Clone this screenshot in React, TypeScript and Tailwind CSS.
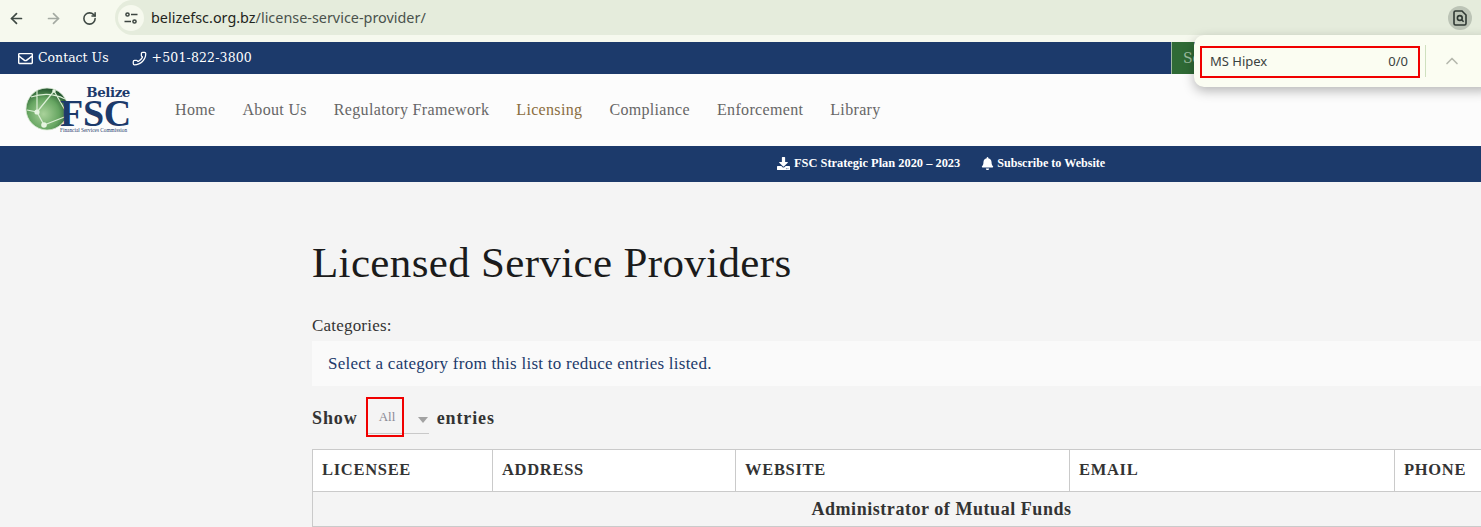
import { ArrowLeft, ArrowRight, RotateCw, ChevronUp, Phone } from 'lucide-react';
import { FaRegEnvelope, FaDownload, FaBell } from 'react-icons/fa';

const navItems = ['Home', 'About Us', 'Regulatory Framework', 'Licensing', 'Compliance', 'Enforcement', 'Library'];

const columns = [
  { label: 'LICENSEE', width: 'w-[180px]' },
  { label: 'ADDRESS', width: 'w-[243px]' },
  { label: 'WEBSITE', width: 'w-[334px]' },
  { label: 'EMAIL', width: 'w-[325px]' },
  { label: 'PHONE', width: 'w-[176px]' },
];

const Logo = () => (
  <div className="relative w-[108px] h-[48px] shrink-0">
    <svg width="54" height="46" viewBox="0 0 54 46" className="absolute left-0 top-0">
      <defs>
        <radialGradient id="globe" cx="0.42" cy="0.62" r="0.62">
          <stop offset="0" stopColor="#a9d29a" />
          <stop offset="0.6" stopColor="#66a561" />
          <stop offset="1" stopColor="#24552f" />
        </radialGradient>
      </defs>
      <circle cx="22" cy="23" r="21" fill="url(#globe)" stroke="#dcebd6" strokeWidth="0.8" />
      <g stroke="#dcefd6" strokeWidth="1.2" fill="none">
        <path d="M12 5 L12 26 L19 39 M12 26 L29 5 M29 5 L40 24 M19 39 L42 30 M6 11 Q24 5 40 13 M2 24 L12 26" />
      </g>
      <circle cx="12" cy="26" r="2.6" fill="#e6f4e0" />
      <circle cx="19" cy="39" r="2.8" fill="#e6f4e0" />
      <circle cx="29" cy="5" r="1.8" fill="#e6f4e0" />
    </svg>
    <span className="absolute right-[3px] top-[-1px] text-[13.4px] leading-[14px] font-bold text-[#1c3a6b] font-['DejaVu_Serif',serif] tracking-[-0.4px]">
      Belize
    </span>
    <span className="absolute left-[35px] top-[14px] text-[38px] leading-[26px] font-bold text-[#1c3a6b] tracking-[-0.3px]">
      FSC
    </span>
    <span className="absolute left-[35px] top-[40px] text-[5.3px] leading-[8px] whitespace-nowrap text-[#1c3a6b]">
      Financial Services Commission
    </span>
  </div>
);

export default function App() {
  return (
    <div className="relative w-[1481px] h-[527px] overflow-hidden bg-[#f4f4f4] font-['Liberation_Serif',serif] text-[#222]">
      {/* Browser bar */}
      <div className="h-[42px] bg-[#f6f9ee] flex items-start">
        <div className="flex items-center w-[115px] h-[36px] pl-[8px] gap-[20px] text-[#3f4a44]">
          <ArrowLeft size={17} strokeWidth={2.4} />
          <ArrowRight size={17} strokeWidth={2.4} className="text-[#a4aaa2]" />
          <RotateCw size={15} strokeWidth={2.5} />
        </div>
        <div className="flex-1 h-[35px] bg-[#e5ecdc] rounded-l-[18px] flex items-center pl-[3px] pr-[9px] font-['Noto_Sans',sans-serif] text-[14.4px]">
          <div className="w-[26px] h-[26px] rounded-full bg-[#f6f9ee] flex items-center justify-center">
            <svg width="14" height="12" viewBox="0 0 14 12" fill="none" stroke="#3c4540" strokeWidth="1.5">
              <circle cx="3.5" cy="2.5" r="1.6" />
              <path d="M7 2.5h6.5M0.5 9.5H7" />
              <circle cx="10.5" cy="9.5" r="1.6" />
            </svg>
          </div>
          <span className="ml-[7px] text-[#1f2420]">belizefsc.org.bz</span>
          <span className="text-[#4a524c]">/license-service-provider/</span>
          <div className="ml-auto w-[24px] h-[24px] rounded-full bg-[#bcc4b6] flex items-center justify-center">
            <svg width="14" height="16" viewBox="0 0 14 16" fill="none" stroke="#2f3833" strokeWidth="1.6">
              <path d="M9 1H2.5A1.5 1.5 0 0 0 1 2.5v11A1.5 1.5 0 0 0 2.5 15h9a1.5 1.5 0 0 0 1.5-1.5V5z" />
              <circle cx="6.8" cy="8" r="2.4" />
              <path d="M8.6 9.8l2 2" />
            </svg>
          </div>
        </div>
      </div>

      {/* Top contact bar */}
      <div className="h-[32px] bg-[#1c3a6b] flex items-center pl-[18px] text-white font-['DejaVu_Serif',serif] text-[12.5px]">
        <FaRegEnvelope size={15} />
        <span className="ml-[5px]">Contact Us</span>
        <Phone size={15} strokeWidth={2} className="ml-[23px] scale-x-[-1]" />
        <span className="ml-[5px] tracking-[0.15px]">+501-822-3800</span>
        {/* the rest of the button sits under the popover */}
        <div className="ml-auto mr-[287px] w-[23px] h-[32px] bg-[#2f6a35] border-l border-[#9fb9a2] text-[#9dbd9f] text-[14px] flex items-center pl-[11px]">
          Se
        </div>
      </div>

      {/* Main nav */}
      <div className="h-[72px] bg-[#fcfcfc] flex items-center pl-[25px]">
        <Logo />
        <nav className="ml-[42px] flex gap-[27px] text-[16px] text-[#666] tracking-[0.33px]">
          {navItems.map((item) => (
            <span key={item} className={item === 'Licensing' ? 'text-[#8a6d3f]' : ''}>
              {item}
            </span>
          ))}
        </nav>
      </div>

      {/* Secondary bar */}
      <div className="h-[36px] pb-[2px] bg-[#1c3a6b] flex items-center pl-[777px] text-white text-[12.4px] font-bold">
        <FaDownload size={13} />
        <span className="ml-[4px]">FSC Strategic Plan 2020 – 2023</span>
        <FaBell size={13} className="ml-[21px]" />
        <span className="ml-[3px] text-[12.1px]">Subscribe to Website</span>
      </div>

      {/* Content */}
      <div className="pl-[312px]">
        <h1 className="mt-[56px] text-[43px] leading-[50px] text-[#1b1b1b] tracking-[0.35px]">Licensed Service Providers</h1>
        <p className="mt-[28px] text-[17px] leading-[20px] text-[#333] tracking-[0.2px]">Categories:</p>
        <div className="mt-[5px] h-[45px] bg-[#fafafa] flex items-center pl-[16px] text-[17px] text-[#1c3a6b] tracking-[0.25px]">
          Select a category from this list to reduce entries listed.
        </div>

        <div className="mt-[11px] h-[40px] pt-[2px] flex items-center font-bold text-[18px] text-[#333] tracking-[0.9px]">
          <span>Show</span>
          <div className="ml-[8px] -mt-[2px] self-start h-[37px] w-[63px] relative border-b border-[#c9c9c9] font-normal text-[13px] tracking-normal text-[#8a8a94]">
            <span className="absolute left-[13px] top-[12px] leading-[16px]">All</span>
            <svg width="10" height="6" viewBox="0 0 10 6" className="absolute left-[52px] top-[20px]">
              <path d="M0 0h10L5 6z" fill="#a2a2a2" />
            </svg>
            <div className="absolute left-0 top-0 w-[38px] h-[40px] border-2 border-[#f00000]" />
          </div>
          <span className="ml-[8px]">entries</span>
        </div>

        <table className="mt-[12px] table-fixed border-collapse w-[1258px] text-[#333]">
          <thead>
            <tr className="h-[42px] bg-white">
              {columns.map((col) => (
                <th key={col.label} className={`${col.width} border border-[#cacaca] text-left pl-[9px] text-[16.5px] font-bold tracking-[0.7px]`}>
                  {col.label}
                </th>
              ))}
            </tr>
          </thead>
          <tbody>
            <tr className="h-[35px]">
              <td colSpan={5} className="border border-[#cacaca] text-center text-[18px] font-bold tracking-[0.55px]">
                Administrator of Mutual Funds
              </td>
            </tr>
          </tbody>
        </table>
      </div>

      {/* Find-in-page popover */}
      <div className="absolute left-[1194px] top-[35px] w-[300px] h-[52px] bg-[#fbfdf2] rounded-[10px] shadow-[0_4px_12px_rgba(0,0,0,0.28)] flex items-center font-['Noto_Sans',sans-serif] text-[13px] text-[#3a4240]">
        <div className="ml-[6px] mt-[1px] w-[220px] h-[32px] border-2 border-[#f00000] flex items-center justify-between pl-[8px] pr-[10px]">
          <span>MS Hipex</span>
          <span>0/0</span>
        </div>
        <div className="ml-[5px] w-[1px] h-[32px] bg-[#cfe0bf]" />
        <ChevronUp size={20} strokeWidth={2} className="ml-[16px] text-[#b6b9ae]" />
      </div>
    </div>
  );
}
